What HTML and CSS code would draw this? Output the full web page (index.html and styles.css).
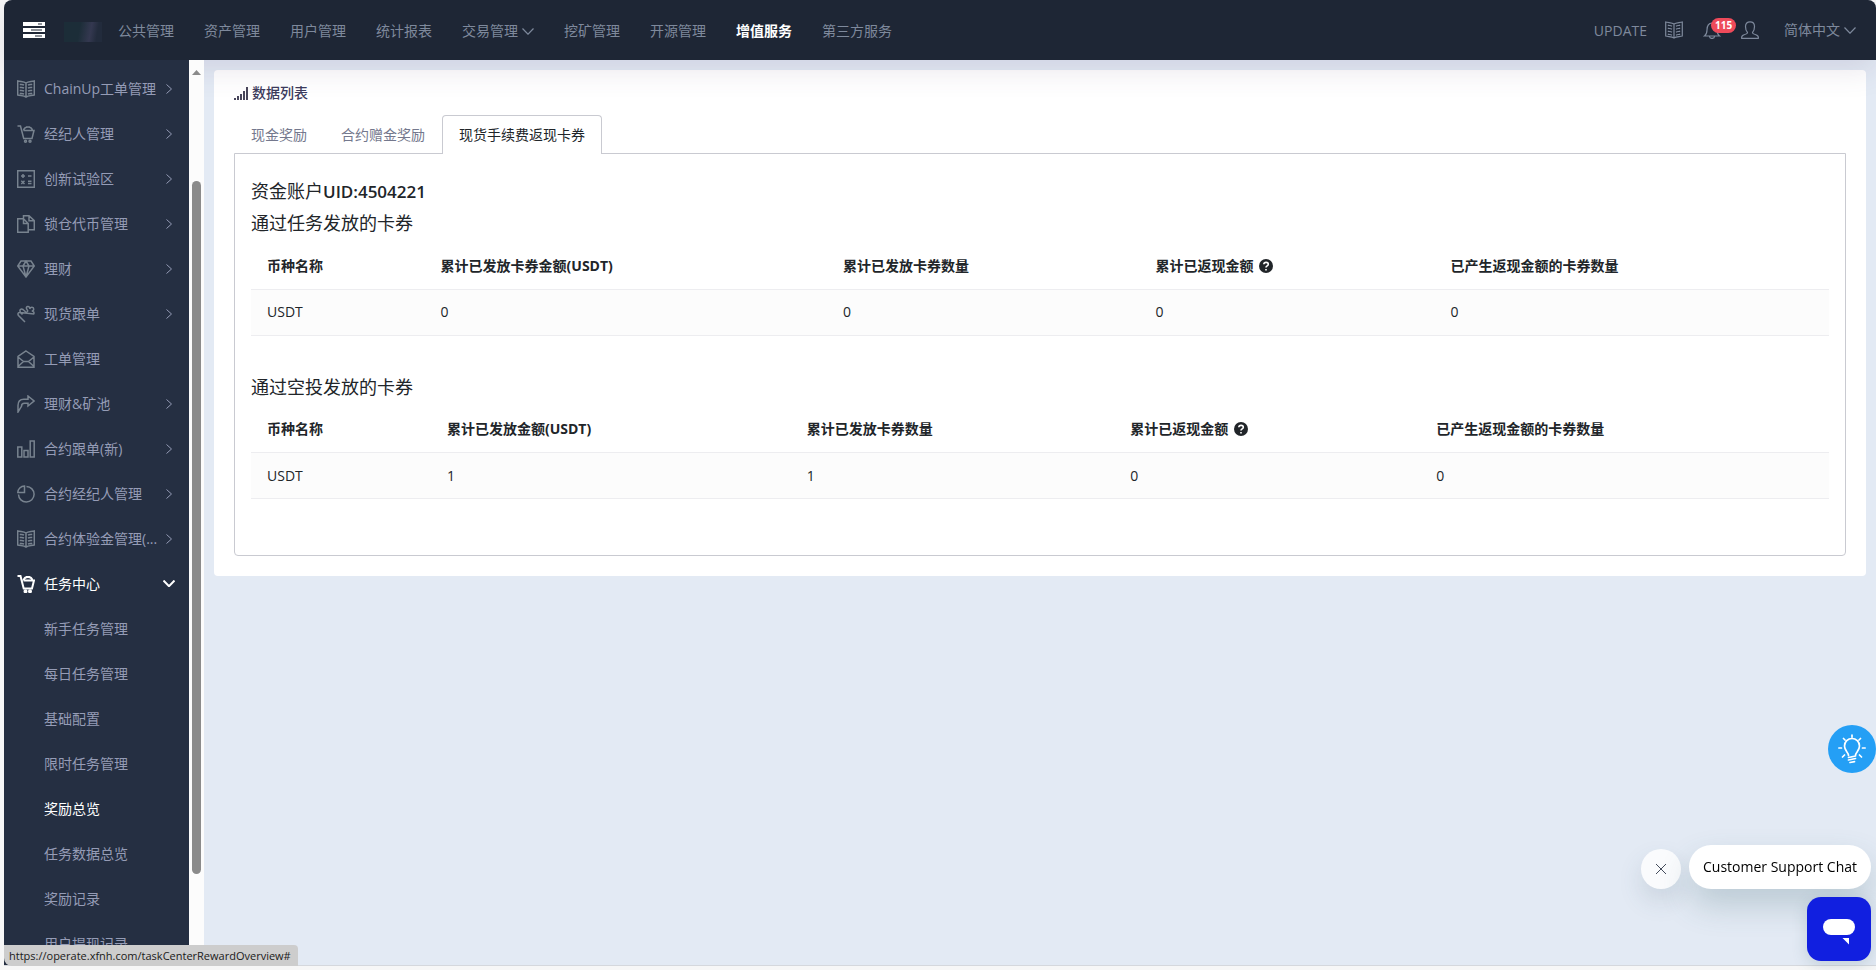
FILE: index.html
```
<!DOCTYPE html>
<html lang="zh-CN">
<head>
    <meta charset="UTF-8">
    <meta name="viewport" content="width=device-width, initial-scale=1.0">
    <title>奖励总览</title>
    <link rel="stylesheet" href="styles.css">
</head>
<body>
    <svg class="sprite" aria-hidden="true">
        <symbol id="i-book" viewBox="0 0 18 18">
            <path d="M9 3C7 1.500 4 1.800 .7 1v14c3 .8 6 .5 8.300 2 2.300-1.500 5.300-1.200 8.300-2V1C14 1.800 11 1.500 9 3zM9 3v14M2.800 4.200c1.500.4 3 .3 4.200 1M2.800 7.200c1.500.4 3 .3 4.200 1M2.800 10.200c1.500.4 3 .3 4.200 1M2.800 13.200c1.500.4 3 .3 4.200 1M15.200 4.200c-1.500.4-3 .3-4.200 1M15.200 7.200c-1.500.4-3 .3-4.200 1M15.200 10.200c-1.500.4-3 .3-4.200 1M15.200 13.200c-1.500.4-3 .3-4.200 1"/>
        </symbol>
        <symbol id="i-cart" viewBox="0 0 18 18">
            <path d="M.5 1h3l3.200 12.500H15L17 5.500H6.500M6.500 5.500C7 3.200 9 2 11 2s4 1.200 4.500 3.500M9 2h4"/>
            <circle cx="8.500" cy="16.200" r="1"/><circle cx="13" cy="16.200" r="1"/>
        </symbol>
        <symbol id="i-calc" viewBox="0 0 18 18">
            <path d="M.7.7h16.600v16.600H.7zM4 6h4M6 4v4M11 6h3.500M4.300 10.800l3.200 3.200M7.500 10.800L4.300 14M11 11.200h3.500M11 13.600h3.500"/>
        </symbol>
        <symbol id="i-copy" viewBox="0 0 18 18">
            <path d="M6.500 3.800H.7v13.500h10.500V8.500zM6.500 3.800v4.700h4.700M6.500 3.800V.7H12l5.300 5v9h-6M12 .7v5h5.300"/>
        </symbol>
        <symbol id="i-gem" viewBox="0 0 18 18">
            <path d="M4 1h10l3.300 5L9 17 .7 6zM.7 6h16.600M6 6l3 11 3-11M6 6l3-5 3 5"/>
        </symbol>
        <symbol id="i-hand" viewBox="0 0 18 18">
            <path d="M8 17L1.500 10.500C.2 8.500 1.500 7 3.200 7.500L5.500 9.500M3.500 7.500C2 5 4 3.200 6 4.500l2.500 2.300C10 8 11.500 6 10 4.500 8.800 3 9.500 1.200 11.200 1.500c1.300.2 1.800 1.500 1.500 2.500 1-2.500 4-2 4 0 0 1.300-1 2-2 2 1.800 0 2.800 1.500 2 3z"/>
        </symbol>
        <symbol id="i-mail" viewBox="0 0 18 18">
            <path d="M9 1l8 5.500v10.800H1V6.500zM1 7l5.500 4.500h5L17 7M1 16.500l5.500-5M17 16.500l-5.500-5"/>
        </symbol>
        <symbol id="i-share" viewBox="0 0 18 18">
            <path d="M11 1l6 5-6 5V8.300H7.500c-2 0-3 1-3 3L1 17v-6.500c0-4 2.200-6.300 5.800-6.300H11z"/>
        </symbol>
        <symbol id="i-bars" viewBox="0 0 18 18">
            <path d="M.8 7h4v10h-4zM7 10.500h4V17H7zM13.200 1h4v16h-4z"/>
        </symbol>
        <symbol id="i-pie" viewBox="0 0 18 18">
            <path d="M9.500 1.500a7.800 7.800 0 1 1-8 8M7.500 1v6.500H.8C.8 4 3.800 1 7.500 1z"/>
        </symbol>
        <symbol id="i-right" viewBox="0 0 6 10"><path d="M.5.5L5.500 5 .5 9.500"/></symbol>
        <symbol id="i-down" viewBox="0 0 12 7"><path d="M.5.5L6 6.200 11.500.5"/></symbol>
        <symbol id="i-help" viewBox="0 0 14 14">
            <circle cx="7" cy="7" r="7" fill="#212529" stroke="none"/>
            <path d="M4.800 5.300c.2-2.600 4.500-2.500 4.500 0C9.300 6.900 7 6.800 7 8.500M7 10v1.600" stroke="#fff" stroke-width="1.600"/>
        </symbol>
    </svg>

    <header class="header">
        <button type="button" class="menu-toggle" aria-label="菜单">
            <svg width="22" height="16" viewBox="0 0 22 16">
                <path d="M0 0h22v4H0zM0 6h22v4H0zM0 12h22v4H0z" fill="#fff"/>
                <path d="M15 2h4M8 8h11M12 14h7" stroke="#1e2635"/>
            </svg>
        </button>
        <a href="#" class="logo" aria-label="首页"></a>
        <nav class="top-nav">
            <a href="#">公共管理</a>
            <a href="#">资产管理</a>
            <a href="#">用户管理</a>
            <a href="#">统计报表</a>
            <a href="#">交易管理<svg class="icon down"><use href="#i-down"/></svg></a>
            <a href="#">挖矿管理</a>
            <a href="#">开源管理</a>
            <a href="#" class="active">增值服务</a>
            <a href="#">第三方服务</a>
        </nav>
        <div class="tools">
            <a href="#" class="update">UPDATE</a>
            <a href="#" class="tool book" aria-label="文档"><svg class="icon"><use href="#i-book"/></svg></a>
            <a href="#" class="tool bell" aria-label="消息">
                <svg class="icon" viewBox="0 0 18 18"><path d="M1.500 15c2-1.500 2.500-3 2.500-6 0-4.500 2-7 5-7s5 2.500 5 7c0 3 .5 4.500 2.500 6zM6.500 15.500c.3 2.600 4.700 2.600 5 0"/></svg>
                <span class="badge">115</span>
            </a>
            <a href="#" class="tool" aria-label="账户"><svg class="icon" viewBox="0 0 18 18"><path d="M.7 17.300c-.4-2 .5-3 2.500-3.600 2.500-.8 3.500-1.200 3.300-2.200C5 10 4.500 8 4.500 5.500 4.500 2.500 6.300.8 9 .8s4.500 1.700 4.500 4.700c0 2.500-.5 4.500-2 6-.2 1 .8 1.400 3.300 2.200 2 .6 2.900 1.600 2.500 3.600z"/></svg></a>
            <label class="lang">
                <select aria-label="语言"><option>简体中文</option></select>
                <svg class="icon down"><use href="#i-down"/></svg>
            </label>
        </div>
    </header>

    <div class="layout">
        <aside class="sidebar">
            <nav class="side-nav">
                <a href="#"><svg class="icon"><use href="#i-book"/></svg><span>ChainUp工单管理</span><svg class="arrow"><use href="#i-right"/></svg></a>
                <a href="#"><svg class="icon"><use href="#i-cart"/></svg><span>经纪人管理</span><svg class="arrow"><use href="#i-right"/></svg></a>
                <a href="#"><svg class="icon"><use href="#i-calc"/></svg><span>创新试验区</span><svg class="arrow"><use href="#i-right"/></svg></a>
                <a href="#"><svg class="icon"><use href="#i-copy"/></svg><span>锁仓代币管理</span><svg class="arrow"><use href="#i-right"/></svg></a>
                <a href="#"><svg class="icon"><use href="#i-gem"/></svg><span>理财</span><svg class="arrow"><use href="#i-right"/></svg></a>
                <a href="#"><svg class="icon"><use href="#i-hand"/></svg><span>现货跟单</span><svg class="arrow"><use href="#i-right"/></svg></a>
                <a href="#"><svg class="icon"><use href="#i-mail"/></svg><span>工单管理</span></a>
                <a href="#"><svg class="icon"><use href="#i-share"/></svg><span>理财&amp;矿池</span><svg class="arrow"><use href="#i-right"/></svg></a>
                <a href="#"><svg class="icon"><use href="#i-bars"/></svg><span>合约跟单(新)</span><svg class="arrow"><use href="#i-right"/></svg></a>
                <a href="#"><svg class="icon"><use href="#i-pie"/></svg><span>合约经纪人管理</span><svg class="arrow"><use href="#i-right"/></svg></a>
                <a href="#"><svg class="icon"><use href="#i-book"/></svg><span>合约体验金管理(...</span><svg class="arrow"><use href="#i-right"/></svg></a>
                <a href="#" class="open"><svg class="icon"><use href="#i-cart"/></svg><span>任务中心</span><svg class="arrow"><use href="#i-down"/></svg></a>
                <a href="#" class="sub">新手任务管理</a>
                <a href="#" class="sub">每日任务管理</a>
                <a href="#" class="sub">基础配置</a>
                <a href="#" class="sub">限时任务管理</a>
                <a href="#" class="sub active">奖励总览</a>
                <a href="#" class="sub">任务数据总览</a>
                <a href="#" class="sub">奖励记录</a>
                <a href="#" class="sub">用户提现记录</a>
            </nav>
            <div class="scrollbar">
                <svg width="9" height="5" viewBox="0 0 9 5"><path d="M4.500 0L9 5H0z" fill="#8b8b8b"/></svg>
                <div class="thumb"></div>
            </div>
        </aside>

        <main class="content">
            <section class="card">
                <h3 class="card-title">
                    <svg width="14" height="14" viewBox="0 0 14 14"><path d="M1 14v-2M4 14v-4M7 14V8M10 14V5M13 14V1" stroke="#48465b" stroke-width="2"/></svg>
                    数据列表
                </h3>
                <div class="tabs">
                    <a href="#">现金奖励</a>
                    <a href="#">合约赠金奖励</a>
                    <a href="#" class="active">现货手续费返现卡券</a>
                </div>
                <div class="panel">
                    <h5>资金账户<b>UID:4504221</b></h5>
                    <h5>通过任务发放的卡券</h5>
                    <table class="task-table">
                        <thead>
                            <tr>
                                <th class="c1">币种名称</th>
                                <th class="c2">累计已发放卡券金额(USDT)</th>
                                <th class="c3">累计已发放卡券数量</th>
                                <th class="c4">累计已返现金额 <svg class="help"><use href="#i-help"/></svg></th>
                                <th>已产生返现金额的卡券数量</th>
                            </tr>
                        </thead>
                        <tbody>
                            <tr>
                                <td>USDT</td>
                                <td>0</td>
                                <td>0</td>
                                <td>0</td>
                                <td>0</td>
                            </tr>
                        </tbody>
                    </table>
                    <h5>通过空投发放的卡券</h5>
                    <table class="airdrop-table">
                        <thead>
                            <tr>
                                <th class="c1">币种名称</th>
                                <th class="c2">累计已发放金额(USDT)</th>
                                <th class="c3">累计已发放卡券数量</th>
                                <th class="c4">累计已返现金额 <svg class="help"><use href="#i-help"/></svg></th>
                                <th>已产生返现金额的卡券数量</th>
                            </tr>
                        </thead>
                        <tbody>
                            <tr>
                                <td>USDT</td>
                                <td>1</td>
                                <td>1</td>
                                <td>0</td>
                                <td>0</td>
                            </tr>
                        </tbody>
                    </table>
                </div>
            </section>
        </main>
    </div>

    <button type="button" class="lamp" aria-label="提示">
        <svg width="28" height="30" viewBox="0 0 28 30">
            <path d="M10.500 21.500c0-3.500-4-4.500-4-9.500a7.500 7.500 0 0 1 15 0c0 5-4 6-4 9.500M10.500 23.500l7-1.500M10.500 26l7-1.500M12 28.500l4.500-.8M14 1v2M5.500 4.500L7 6M22.500 4.500L21 6M.8 14h2.700M24.500 14h2.700M4.500 23L6.500 21M23.500 23l-2-2"/>
        </svg>
    </button>

    <div class="chat">
        <div class="chat-row">
            <button type="button" class="chat-close" aria-label="Close">
                <svg width="12" height="12" viewBox="0 0 12 12"><path d="M1 1l10 10M11 1L1 11" stroke="#444c5c" fill="none"/></svg>
            </button>
            <a href="#" class="chat-label">Customer Support Chat</a>
        </div>
        <button type="button" class="chat-open" aria-label="Open chat">
            <svg width="32" height="28" viewBox="0 0 32 28"><rect width="32" height="16" y="1" rx="8" fill="#fff"/><path d="M19.500 20H26v6.500z" fill="#fff"/></svg>
        </button>
    </div>

    <div class="status">https://operate.xfnh.com/taskCenterRewardOverview#</div>
</body>
</html>
```

FILE: styles.css
```
* {
    box-sizing: border-box;
}
body {
    margin: 0;
    padding: 0 0 4px 4px;
    height: 100vh;
    display: flex;
    flex-direction: column;
    overflow: hidden;
    background: #f7f7f7;
    font-family: "Open Sans", "Noto Sans CJK SC", sans-serif;
    font-size: 14px;
    line-height: 20px;
    color: #212529;
}
a {
    color: inherit;
    text-decoration: none;
}
button, select {
    border: 0;
    padding: 0;
    font: inherit;
    color: inherit;
    background: none;
    cursor: pointer;
}
.sprite {
    display: none;
}
.icon {
    width: 18px;
    height: 18px;
    flex: none;
    fill: none;
    stroke: currentColor;
    stroke-width: 1.2;
}
.icon.down {
    width: 12px;
    height: 7px;
}

/* header */
.header {
    flex: none;
    height: 60px;
    display: flex;
    align-items: center;
    padding: 0 20px 0 19px;
    background: #1e2635;
    border-radius: 8px 8px 0 0;
    box-shadow: 0 10px 30px rgba(82, 63, 105, 0.13);
    color: #7e899c;
    position: relative;
    z-index: 1;
}
.menu-toggle {
    display: flex;
    margin-right: 19px;
}
.logo {
    width: 38px;
    height: 20px;
    margin: 4px 16px 0 0;
    background: linear-gradient(100deg, #1c2d38 40%, #343850 68%, #222b3c 85%);
}
.top-nav {
    display: flex;
    gap: 30px;
    padding-top: 2px;
}
.top-nav a {
    display: flex;
    align-items: center;
    gap: 4px;
}
.top-nav .active {
    color: #fff;
    font-weight: bold;
}
.tools {
    margin-left: auto;
    display: flex;
    align-items: center;
}
.tool {
    display: flex;
    margin-right: 20px;
    position: relative;
}
.update {
    margin-right: 18px;
    padding-top: 2px;
}
.badge {
    position: absolute;
    left: 8px;
    top: -3px;
    padding: 0 4px;
    border-radius: 8px;
    background: #ee4a5a;
    color: #fff;
    font-size: 10px;
    font-weight: bold;
    line-height: 15px;
}
.lang {
    display: flex;
    align-items: center;
    gap: 4px;
    margin-left: 5px;
}
.lang select {
    appearance: none;
}

/* sidebar */
.layout {
    flex: 1;
    min-height: 0;
    display: flex;
    background: #e3eaf4;
    border-bottom: 1px solid #d5d8dd;
}
.sidebar {
    width: 200px;
    flex: none;
    display: flex;
    position: relative;
    z-index: 2;
    background: #fcfcfc;
}
.side-nav {
    flex: 1;
    overflow: hidden;
    padding-top: 6px;
    background: #252f42;
    color: #959cb6;
}
.side-nav a {
    display: flex;
    align-items: center;
    height: 45px;
    padding: 0 14px 0 13px;
}
.side-nav .icon {
    margin-right: 9px;
    color: #78838f;
    stroke-width: 1.5;
}
.side-nav span {
    flex: 1;
    white-space: nowrap;
}
.side-nav .sub {
    padding-left: 40px;
}
.side-nav .active, .side-nav .open, .side-nav .open .icon {
    color: #fff;
}
.side-nav .open .icon {
    stroke-width: 2;
}
.arrow {
    width: 12px;
    height: 10px;
    flex: none;
    fill: none;
    stroke: currentColor;
}
.open .arrow {
    height: 7px;
    stroke-width: 2;
}
.scrollbar {
    width: 15px;
    display: flex;
    flex-direction: column;
    align-items: center;
    padding: 10px 0 91px;
}
.thumb {
    flex: 1;
    width: 9px;
    margin-top: 106px;
    border-radius: 5px;
    background: #8b8b8b;
}

/* content */
.content {
    flex: 1;
    padding: 10px;
}
.card {
    padding: 10px 20px 20px;
    border-radius: 4px;
    background: #fff;
}
.card-title {
    display: flex;
    align-items: center;
    gap: 4px;
    margin: 0 0 9px;
    height: 26px;
    font-size: 14px;
    font-weight: 500;
    color: #3c3b5c;
}
.tabs {
    display: flex;
    padding-left: 0;
    margin-bottom: -1px;
    color: #74788d;
}
.tabs a {
    padding: 9px 16px;
    border: 1px solid transparent;
    border-bottom: 0;
    border-radius: 4px 4px 0 0;
}
.tabs .active {
    color: #212529;
    background: #fff;
    border-color: #c9cad1;
    position: relative;
}
.panel {
    padding: 23px 16px 56px;
    border: 1px solid #c9cad1;
    border-radius: 0 0 4px 4px;
}
.panel h5 {
    margin: 0 0 3px;
    font-size: 18px;
    font-weight: normal;
    line-height: 28px;
}
.panel h5 b {
    font-size: 17px;
    font-weight: 600;
}
table {
    width: 100%;
    margin-top: 6px;
    table-layout: fixed;
    border-collapse: collapse;
}
.task-table {
    margin-bottom: 37px;
}
th, td {
    height: 46px;
    padding: 0 16px;
    text-align: left;
    border-bottom: 1px solid #ededf0;
}
th {
    font-weight: bold;
}
td {
    background: #fcfcfc;
}
.help {
    width: 14px;
    height: 14px;
    margin-left: 2px;
    vertical-align: -2px;
    fill: none;
}
.task-table .c1 { width: 11%; }
.task-table .c2 { width: 25.5%; }
.task-table .c3 { width: 19.8%; }
.task-table .c4 { width: 18.7%; }
.airdrop-table .c1 { width: 11.4%; }
.airdrop-table .c2 { width: 22.8%; }
.airdrop-table .c3 { width: 20.5%; }
.airdrop-table .c4 { width: 19.4%; }

/* floating widgets */
.lamp {
    position: fixed;
    right: 0;
    bottom: 197px;
    width: 48px;
    height: 48px;
    border-radius: 50%;
    background: #249ff5;
    display: flex;
    align-items: center;
    justify-content: center;
    z-index: 3;
}
.lamp svg {
    fill: none;
    stroke: #fff;
    stroke-width: 1.7;
    stroke-linecap: round;
}
.chat {
    position: fixed;
    right: 5px;
    bottom: 9px;
    display: flex;
    flex-direction: column;
    align-items: flex-end;
    gap: 8px;
    z-index: 3;
}
.chat-row {
    display: flex;
    align-items: flex-end;
    gap: 8px;
}
.chat-close {
    width: 40px;
    height: 40px;
    border-radius: 50%;
    background: #fafbfd;
    box-shadow: 0 12px 24px rgba(60, 90, 110, 0.15);
    display: flex;
    align-items: center;
    justify-content: center;
}
.chat-label {
    padding: 11px 14px;
    border-radius: 22px;
    background: #fff;
    box-shadow: 0 16px 32px rgba(60, 100, 110, 0.24);
    color: #000;
    line-height: 22px;
}
.chat-open {
    width: 64px;
    height: 64px;
    border-radius: 14px;
    background: #111fe0;
    box-shadow: 0 4px 16px rgba(60, 100, 110, 0.2);
    display: flex;
    align-items: center;
    justify-content: center;
    padding-top: 6px;
}
.status {
    position: fixed;
    left: 4px;
    bottom: 4px;
    padding: 0 7px 0 5px;
    border-radius: 0 4px 0 8px;
    background: #cdcdcd;
    color: #1a1a1a;
    font-size: 11px;
    line-height: 21px;
    z-index: 4;
}
```
